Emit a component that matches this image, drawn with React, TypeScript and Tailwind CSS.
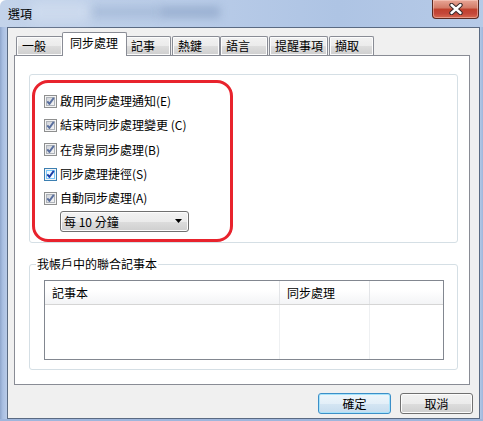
import React from "react";

const FONT = { fontFamily: '"Noto Sans CJK TC", "Noto Sans", sans-serif' };

function Check({ hover }: { hover?: boolean }) {
  const id = hover ? "cbh" : "cbn";
  return (
    <svg width="13" height="13" viewBox="0 0 13 13" className="shrink-0">
      <defs>
        <linearGradient id={id} x1="0" y1="0" x2="1" y2="1">
          {hover ? (
            <>
              <stop offset="0" stopColor="#e6f5fd" />
              <stop offset="1" stopColor="#ffffff" />
            </>
          ) : (
            <>
              <stop offset="0" stopColor="#cdd0d6" />
              <stop offset="1" stopColor="#f7f7f7" />
            </>
          )}
        </linearGradient>
      </defs>
      <rect x="0.5" y="0.5" width="12" height="12" fill="#f4f4f4" stroke={hover ? "#3c7fb1" : "#8e8f8f"} />
      <rect x="2.5" y="2.5" width="8" height="8" fill={`url(#${id})`} stroke={hover ? "#79c6f9" : "#aeb3b9"} />
      <path
        d="M3.3 6.3 L5.4 8.9 L9.8 2.9"
        fill="none"
        stroke={hover ? "#1c3fa8" : "#5a6f9e"}
        strokeWidth="1.9"
        strokeLinejoin="round"
      />
    </svg>
  );
}

function Row({ label, h, hover }: { label: string; h: string; hover?: boolean }) {
  return (
    <div className={`flex items-center ${h}`}>
      <div className="ml-[9px]">
        <Check hover={hover} />
      </div>
      <span className="ml-[3px] text-[12px] leading-[14px] text-black whitespace-nowrap">{label}</span>
    </div>
  );
}

function CloseButton() {
  return (
    <div className="w-[47px] h-[19px] rounded-b-[4px] border border-t-0 border-[#5a2a22] bg-[linear-gradient(#e8a696,#d27a66_45%,#c0402c_50%,#c4473a_75%,#d7694f)] shadow-[inset_0_0_0_1px_rgba(255,220,210,0.45)] flex items-center justify-center">
      <svg width="16" height="12" viewBox="0 0 16 12">
        <path d="M3.5 2 L12.5 10 M12.5 2 L3.5 10" stroke="#3a2a2a" strokeWidth="4.4" strokeLinecap="round" />
        <path d="M3.5 2 L12.5 10 M12.5 2 L3.5 10" stroke="#ffffff" strokeWidth="2.4" strokeLinecap="round" />
      </svg>
    </div>
  );
}

function Tab({ label, w, ml }: { label: string; w: string; ml: string }) {
  return (
    <div
      className={`${w} ${ml} h-[19px] border border-b-0 border-[#898c95] rounded-t-[2px] bg-[linear-gradient(#f2f2f2,#ebebeb_50%,#dddddd_50%,#cfcfcf)] shadow-[inset_0_0_0_1px_#fcfcfc] pl-[5px] text-[12px] leading-[18px] text-black whitespace-nowrap`}
    >
      {label}
    </div>
  );
}

function Button({ label, def }: { label: string; def?: boolean }) {
  return (
    <div
      className={`w-[73px] h-[21px] rounded-[3px] border flex items-center justify-center text-[12px] leading-[14px] text-black ${
        def
          ? "border-[#3c8fc8] shadow-[inset_0_0_0_1px_#a6e3fb] bg-[linear-gradient(#eef6fb,#e3eff8_50%,#d5e6f3_50%,#c6dcee)]"
          : "border-[#707070] shadow-[inset_0_0_0_1px_#fcfcfc] bg-[linear-gradient(#f2f2f2,#ebebeb_50%,#dddddd_50%,#cfcfcf)]"
      }`}
    >
      {label}
    </div>
  );
}

export default function App() {
  return (
    <div
      style={FONT}
      className="w-[483px] h-[421px] overflow-hidden flex flex-col rounded-tl-[6px] bg-[linear-gradient(90deg,#c3d3ea,#b9cce8_40%,#aec4e4_70%,#b6cae7)]"
    >
      {/* title bar */}
      <div className="relative h-[27px] flex items-start shrink-0">
        <div className="absolute left-[90px] top-[6px] w-[70px] h-[12px] bg-[#8fa7c9] opacity-40 blur-[4px]" />
        <div className="absolute left-[160px] top-[6px] w-[60px] h-[12px] bg-[#7f98bd] opacity-50 blur-[4px]" />
        <div className="absolute left-[30px] top-[2px] w-[60px] h-[20px] bg-[#d6e1f1] opacity-60 blur-[6px]" />
        <span className="relative ml-[8px] mt-[6px] text-[12px] leading-[16px] text-black">選項</span>
        <div className="relative ml-auto mr-[4px]">
          <CloseButton />
        </div>
      </div>

      <div className="flex flex-1">
        <div className="w-[7px] bg-[linear-gradient(90deg,#8fa6cc,#a9bfe2_40%,#b9cbe8)]" />
        {/* client */}
        <div className="w-[473px] h-[392px] border border-[#5a6a82] bg-[#f0f0f0] flex flex-col">
          <div className="ml-[6px] mt-[4px] w-[456px] flex flex-col">
            {/* tab strip */}
            <div className="h-[23px] flex items-end pl-[2px]">
              <Tab label="一般" w="w-[47px]" ml="ml-0" />
              <div className="relative z-10 ml-[-1px] mb-[-1px] w-[65px] h-[24px] border border-b-0 border-[#898c95] rounded-t-[2px] bg-white pl-[7px] pt-[2px] text-[12px] leading-[16px] text-black whitespace-nowrap">
                同步處理
              </div>
              <Tab label="記事" w="w-[46px]" ml="ml-[-2px]" />
              <Tab label="熱鍵" w="w-[48px]" ml="ml-[1px]" />
              <Tab label="語言" w="w-[48px]" ml="ml-0" />
              <Tab label="提醒事項" w="w-[59px]" ml="ml-[1px]" />
              <Tab label="擷取" w="w-[45px]" ml="ml-[1px]" />
            </div>
            {/* tab page */}
            <div className="h-[330px] border border-[#898c95] bg-white flex flex-col">
              {/* group 1 */}
              <div className="ml-[14px] mt-[18px] w-[429px] h-[169px] border border-[#d5dfe5] rounded-[3px]">
                <div className="ml-[2px] mt-[5px] w-[201px] h-[162px] border-[3px] border-[#e8232d] rounded-[16px] pt-[6px] flex flex-col">
                  <Row label="啟用同步處理通知(E)" h="h-[24px]" />
                  <Row label="結束時同步處理變更 (C)" h="h-[24px]" />
                  <Row label="在背景同步處理(B)" h="h-[25px]" />
                  <Row label="同步處理捷徑(S)" h="h-[24px]" hover />
                  <Row label="自動同步處理(A)" h="h-[24px]" />
                  <div className="ml-[25px] mt-[1px] w-[129px] h-[21px] border border-[#707070] rounded-[3px] shadow-[inset_0_0_0_1px_#fcfcfc] bg-[linear-gradient(#f2f2f2,#ebebeb_50%,#dddddd_50%,#cfcfcf)] flex items-center pl-[3px] pr-[5px]">
                    <span className="text-[12px] leading-[14px] text-black whitespace-nowrap">每 10 分鐘</span>
                    <svg className="ml-auto" width="8" height="5" viewBox="0 0 8 5">
                      <path d="M0 0 H7 L3.5 4 Z" fill="#000" />
                    </svg>
                  </div>
                </div>
              </div>
              {/* group 2 */}
              <div className="relative ml-[14px] mt-[21px] w-[429px] h-[106px] border border-[#d5dfe5] rounded-[3px] flex flex-col">
                <span className="absolute left-[6px] top-[-9px] bg-white px-[1px] text-[12px] leading-[16px] text-black whitespace-nowrap">
                  我帳戶中的聯合記事本
                </span>
                <div className="ml-[14px] mt-[15px] w-[400px] h-[80px] border border-[#828790] bg-white flex flex-col">
                  <div className="h-[24px] flex border-b border-[#d5d5d5] bg-[linear-gradient(#ffffff,#ffffff_40%,#f3f4f6)]">
                    <div className="w-[235px] border-r border-[#e3e5e8] pl-[7px] flex items-center text-[12px] leading-[14px] text-black">
                      記事本
                    </div>
                    <div className="w-[90px] border-r border-[#e3e5e8] pl-[7px] flex items-center text-[12px] leading-[14px] text-black">
                      同步處理
                    </div>
                    <div className="flex-1" />
                  </div>
                  <div className="flex-1 flex">
                    <div className="w-[235px] border-r border-[#eef0f2]" />
                    <div className="w-[90px] border-r border-[#eef0f2]" />
                    <div className="flex-1" />
                  </div>
                </div>
              </div>
            </div>
          </div>
          {/* buttons */}
          <div className="mt-[8px] flex justify-end gap-[9px] pr-[6px]">
            <Button label="確定" def />
            <Button label="取消" />
          </div>
        </div>
        <div className="w-[3px] bg-[linear-gradient(90deg,#b4c8e6,#9fb6dc)]" />
      </div>
      <div className="h-[2px] shrink-0 bg-[#9fb6dc]" />
    </div>
  );
}
